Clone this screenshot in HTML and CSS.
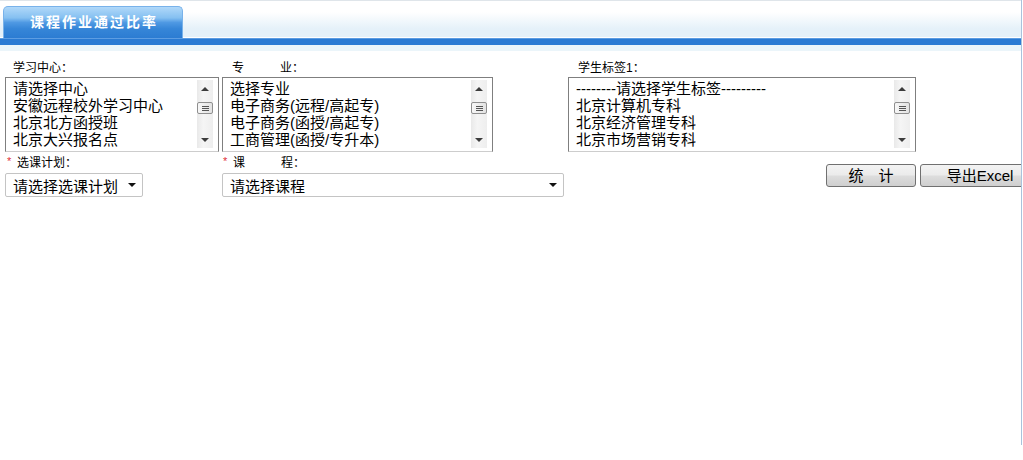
FILE: index.html
```html
<!DOCTYPE html>
<html lang="zh-CN">
<head>
    <meta charset="UTF-8">
    <title>课程作业通过比率</title>
    <link rel="stylesheet" href="styles.css">
</head>
<body>
    <div class="page">
        <div class="tabs">
            <div class="tab">课程作业通过比率</div>
        </div>
        <div class="tabs-bar"></div>
        <div class="tabs-band"></div>

        <div class="form">
            <!-- list filters -->
            <div class="row">
                <div class="field f-center">
                    <div class="lbl">学习中心：</div>
                    <div class="listbox">
                        <ul class="options">
                            <li>请选择中心</li>
                            <li>安徽远程校外学习中心</li>
                            <li>北京北方函授班</li>
                            <li>北京大兴报名点</li>
                        </ul>
                        <div class="scroll">
                            <span class="sb-btn"><i class="tri up"></i></span>
                            <span class="thumb"><i></i><i></i><i></i></span>
                            <span class="sb-btn"><i class="tri down"></i></span>
                        </div>
                    </div>
                </div>
                <div class="field f-major">
                    <div class="lbl lbl-wide">专　　　业：</div>
                    <div class="listbox">
                        <ul class="options">
                            <li>选择专业</li>
                            <li>电子商务(远程/高起专)</li>
                            <li>电子商务(函授/高起专)</li>
                            <li>工商管理(函授/专升本)</li>
                        </ul>
                        <div class="scroll">
                            <span class="sb-btn"><i class="tri up"></i></span>
                            <span class="thumb"><i></i><i></i><i></i></span>
                            <span class="sb-btn"><i class="tri down"></i></span>
                        </div>
                    </div>
                </div>
                <div class="field f-tag">
                    <div class="lbl lbl-wide">学生标签<span class="num">1</span>：</div>
                    <div class="listbox">
                        <ul class="options">
                            <li>--------请选择学生标签---------</li>
                            <li>北京计算机专科</li>
                            <li>北京经济管理专科</li>
                            <li>北京市场营销专科</li>
                        </ul>
                        <div class="scroll">
                            <span class="sb-btn"><i class="tri up"></i></span>
                            <span class="thumb"><i></i><i></i><i></i></span>
                            <span class="sb-btn"><i class="tri down"></i></span>
                        </div>
                    </div>
                </div>
            </div>

            <!-- dropdowns and actions -->
            <div class="row row-2">
                <div class="field f-plan">
                    <div class="lbl lbl-req"><span class="req">*</span>选课计划：</div>
                    <div class="select sel-plan">
                        <span>请选择选课计划</span>
                        <i class="caret"></i>
                    </div>
                </div>
                <div class="field f-course">
                    <div class="lbl lbl-req"><span class="req">*</span>课　　　程：</div>
                    <div class="select sel-course">
                        <span>请选择课程</span>
                        <i class="caret"></i>
                    </div>
                </div>
                <div class="actions">
                    <button class="btn btn-stat">统　计</button>
                    <button class="btn btn-export">导出Excel</button>
                </div>
            </div>
        </div>
    </div>
</body>
</html>
```

FILE: styles.css
```css
body {
    margin: 0;
    background: #fff;
    font-family: "Liberation Sans", "Noto Sans CJK SC", sans-serif;
    color: #000;
}
.page {
    width: 1021px;
    height: 445px;
    border-right: 1px solid #a9c2dc;
    overflow: hidden;
}
.tabs {
    height: 37px;
    border-top: 1px solid #dfe5ea;
    padding-left: 3px;
    display: flex;
    align-items: flex-end;
    background: linear-gradient(to bottom, #ffffff 0%, #ffffff 30%, #e5f1f9 75%, #e5f1f9 97%, #ffffff 97%);
}
.tab {
    width: 176px;
    height: 31px;
    border: 1px solid #78b2ea;
    border-bottom: none;
    border-radius: 5px 5px 0 0;
    background: linear-gradient(to bottom, #b0d8f9 0%, #85c0f1 35%, #4f99e3 50%, #3686d8 70%, #2c7cd2 100%);
    color: #fff;
    font-size: 14px;
    font-weight: bold;
    letter-spacing: 2px;
    text-align: center;
    line-height: 30px;
    padding-left: 2px;
}
.tabs-bar {
    height: 6px;
    border-top: 1px solid #5d9de2;
    background: #2b7bd3;
}
.tabs-band {
    height: 6px;
    background: #ebf5fa;
}

.form {
    padding: 9px 0 0 5px;
}
.row {
    display: flex;
    align-items: flex-start;
}
.field {
    flex-shrink: 0;
}
.lbl {
    font-family: "Noto Sans CJK SC", sans-serif;
    font-size: 12px;
    line-height: 14px;
    height: 14px;
    padding-left: 8px;
    margin-bottom: 3px;
    white-space: nowrap;
}
.lbl .num {
    font-family: "Liberation Sans", sans-serif;
}
.lbl-wide {
    padding-left: 10px;
}
.f-center { width: 214px; }
.f-major { width: 271px; margin-left: 3px; }
.f-tag { width: 348px; margin-left: 75px; }

.listbox {
    height: 73px;
    border: 1px solid #7f7f7f;
    border-bottom-color: #cdcdcd;
    display: flex;
    background: #fff;
}
.options {
    flex: 1;
    list-style: none;
    margin: 0;
    padding: 2px 0 0 7px;
    font-size: 15px;
    line-height: 17px;
    white-space: nowrap;
    overflow: hidden;
}
.scroll {
    width: 16px;
    height: 68px;
    margin: 2px 5px 0 0;
    display: flex;
    flex-direction: column;
    align-items: center;
    background: linear-gradient(to right, #e9e9e9, #f5f5f5 40%, #eeeeee);
}
.sb-btn {
    height: 17px;
    width: 16px;
    display: flex;
    align-items: center;
    justify-content: center;
}
.sb-btn:last-child {
    margin-top: auto;
    height: 16px;
}
.tri {
    width: 0;
    height: 0;
    border-left: 4px solid transparent;
    border-right: 4px solid transparent;
}
.tri.up { border-bottom: 4px solid #3c3c3c; }
.tri.down { border-top: 4px solid #3c3c3c; }
.thumb {
    width: 14px;
    height: 10px;
    margin-top: 5px;
    border: 1px solid #8f8f8f;
    border-radius: 2px;
    background: linear-gradient(to right, #f7f7f7, #e2e2e2);
    display: flex;
    flex-direction: column;
    justify-content: center;
    align-items: center;
    gap: 1px;
}
.thumb i {
    width: 7px;
    height: 1px;
    background: #555;
}

.row-2 {
    margin-top: 3px;
}
.lbl-req {
    padding-left: 2px;
    margin-bottom: 4px;
}
.req {
    font-family: "Liberation Sans", sans-serif;
    color: #e0303a;
    font-size: 11px;
    display: inline-block;
    width: 10px;
    vertical-align: top;
    line-height: 12px;
}
.f-course .lbl-req {
    padding-left: 1px;
}
.f-plan { width: 217px; }
.f-course { width: 342px; }
.select {
    height: 22px;
    border: 1px solid #c4c4c4;
    border-radius: 2px;
    display: flex;
    align-items: center;
    justify-content: space-between;
    padding: 0 6px 0 7px;
    font-size: 15px;
    background: #fff;
}
.sel-plan { width: 123px; }
.sel-course { width: 327px; }
.caret {
    width: 0;
    height: 0;
    border-left: 4px solid transparent;
    border-right: 4px solid transparent;
    border-top: 4px solid #111;
}

.actions {
    display: flex;
    margin: 9px 0 0 262px;
    flex-shrink: 0;
}
.btn {
    height: 23px;
    border: 1px solid #707070;
    border-radius: 3px;
    background: linear-gradient(to bottom, #f3f3f3 0%, #ebebeb 48%, #dddddd 52%, #cfcfcf 100%);
    font-family: "Liberation Sans", "Noto Sans CJK SC", sans-serif;
    font-size: 15px;
    color: #000;
    padding: 0;
    line-height: 20px;
    flex-shrink: 0;
}
.btn-stat { width: 90px; }
.btn-export { width: 120px; margin-left: 4px; }
```
